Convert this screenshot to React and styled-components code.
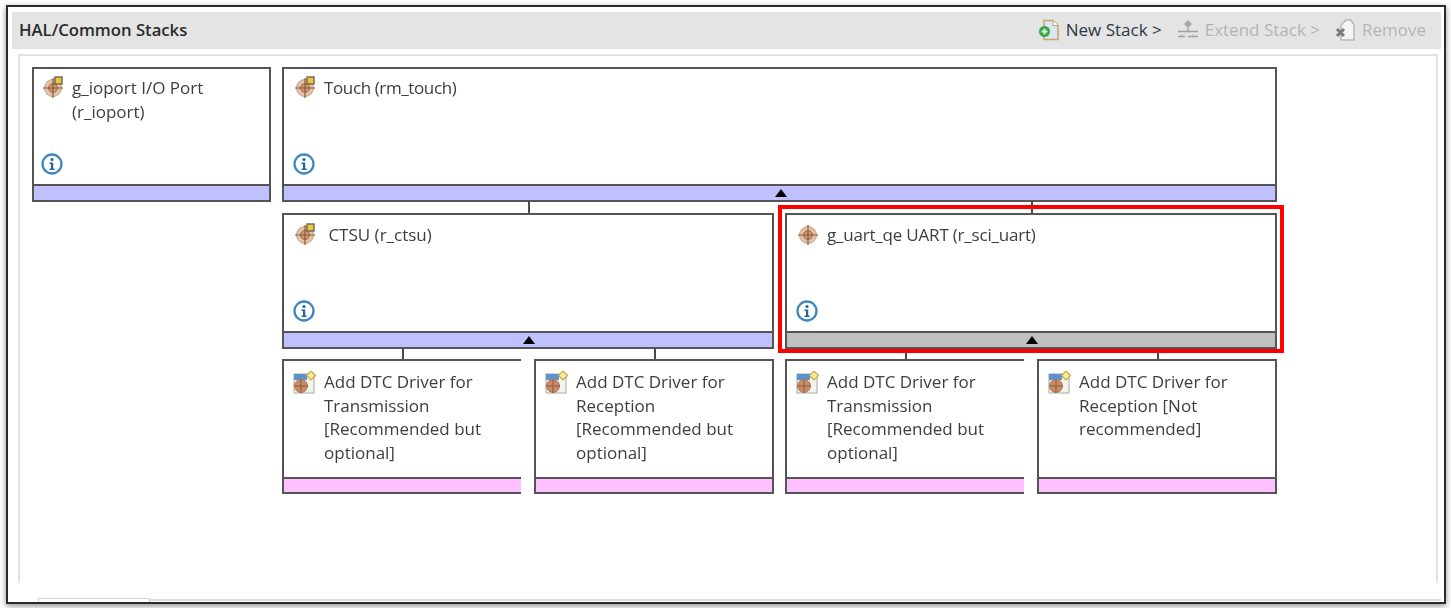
import React from "react";
import styled, { createGlobalStyle } from "styled-components";

const Global = createGlobalStyle`
  html, body { margin: 0; padding: 0; background: #fff; overflow: hidden; }
  body { width: 1451px; height: 608px; font-family: "Open Sans", "Noto Sans", sans-serif; }
`;
const Frame = styled.div`
  box-sizing: border-box; width: 1440px; height: 599px; margin: 5px 0 0 6px;
  border: 2px solid #2a2a2a; background: #fff;
  box-shadow: 0 2px 6px rgba(0,0,0,.45);
  padding: 5px 3px 0 4px; display: flex; flex-direction: column;
  filter: blur(0.55px);
`;
const Header = styled.header`
  height: 37px; box-sizing: border-box; flex: none; background: #e4e4e4; display: flex; align-items: center;
  padding: 0 15px 2px 7px; justify-content: space-between;
`;
const Title = styled.h1`
  margin: 0; font-size: 16.7px; font-weight: 600; color: #2b2b2b;
`;
const Toolbar = styled.nav`display: flex; gap: 15px;`;
const ToolButton = styled.span`
  display: flex; align-items: center; gap: ${p => (p.$disabled ? 6 : 7)}px; font-size: 17px;
  color: ${p => (p.$disabled ? "#b4b4b4" : "#2f3640")};
`;
const Panel = styled.main`
  flex: none; height: 529px; width: 1420px; box-sizing: border-box; margin: 5px 0 0 6px;
  border: solid #e2e2e2; border-width: 2px 2px 0 2px; padding: 11px 0 0 12px;
  display: flex; gap: 11px; align-items: flex-start;
`;
const TabStrip = styled.div`
  flex: none; margin-top: 15px; height: 3px; display: flex; margin-left: 26px;
`;
const Tab = styled.div`
  width: 110px; border: solid #d4d4d4; border-width: 1px 1px 0 1px; height: 3px; flex: none;
`;
const TabRest = styled.div`flex: 1; width: 1290px; border-top: 2px solid #dcdcdc; margin-top: 1px;`;

const Stack = styled.div`display: flex; flex-direction: column; width: ${p => p.$w}px; flex: none;`;
const Row = styled.div`display: flex; gap: ${p => p.$gap}px;`;
const Branch = styled.div`display: flex; flex-direction: column; width: ${p => p.$w}px; flex: none;`;
const Stub = styled.div`width: 2px; height: ${p => p.$h}px; background: #4a4a4a; align-self: center; margin-left: 2px;`;

const Card = styled.section`
  position: relative; box-sizing: border-box; height: ${p => p.$h}px; background: #fff;
  border: solid #555; border-width: ${p => (p.$open ? "2px 0 2px 2px" : "2px")};
  display: flex; flex-direction: column;
`;
const Body = styled.div`
  flex: 1; padding: ${p => `${p.$top}px 14px 0 ${p.$inset}px`};
  display: flex; flex-direction: column; min-height: 0;
`;
const Heading = styled.div`display: flex; gap: 7px; align-items: flex-start;`;
const Label = styled.div`
  font-size: 17px; line-height: ${p => p.$lh || 24}px; color: #3e3e3e; white-space: pre-line;
  letter-spacing: ${p => p.$track || 0}px;
`;
const InfoSlot = styled.div`margin-top: auto; margin-bottom: 9px; margin-left: -2px; height: 22px;`;
const Bar = styled.div`
  flex: none; height: 16px; box-sizing: border-box; border-top: 2px solid #555; background: ${p => p.$c};
  display: flex; align-items: center; justify-content: center;
`;
const DriverBar = styled(Bar)`height: 15px;`;
const Caret = styled.span`
  width: 0; height: 0; margin-left: 2px; border: solid transparent; border-width: 0 6px 8px 6px; border-bottom-color: #000;
`;
const Highlight = styled.div`
  position: absolute; inset: -10px -9px -6px -9px; border: 4px solid #f00; pointer-events: none;
`;

const Target = ({ badge }) => (
  <svg width="22" height="22" viewBox="0 0 22 22" style={{ flex: "none" }}>
    <circle cx="10" cy="12" r="8.500" fill="#e0c4ac" stroke="#c4a082" />
    <circle cx="10" cy="12" r="4.500" fill="#cf9672" stroke="#a5683f" />
    <path d="M10 2v20M0 12h20" stroke="#8a5a3a" strokeWidth="1.200" />
    {badge && <rect x="12" y="1" width="7" height="7" fill="#f3c33c" stroke="#6a6a50" strokeWidth="1.400" />}
  </svg>
);
const Info = () => (
  <svg width="22" height="22" viewBox="0 0 22 22" style={{ display: "block" }}>
    <circle cx="11" cy="11" r="9.500" fill="#fff" stroke="#3f87bd" strokeWidth="2.300" />
    <circle cx="11" cy="6.500" r="1.600" fill="#24669c" />
    <path d="M8.500 9.500h3.700v6h1.400v1.500H8.600v-1.500h1.400V11H8.500z" fill="#24669c" />
  </svg>
);
const DriverIcon = () => (
  <svg width="24" height="24" viewBox="0 0 24 24" style={{ flex: "none", marginTop: 1 }}>
    <rect x="1" y="3" width="20" height="19" fill="#f2f2ee" stroke="#a8aea0" />
    <rect x="1" y="3" width="13" height="6" fill="#5d93cc" />
    <circle cx="8" cy="15" r="6.500" fill="#c98a66" stroke="#b57a58" />
    <path d="M8 8v14M1 15h14" stroke="#8f5a3c" strokeWidth="1" />
    <path d="M18 0l4.500 4.500L18 9l-4.500-4.500z" fill="#fbe9a0" stroke="#c9a83e" strokeWidth="1.200" />
  </svg>
);
const NewIcon = () => (
  <svg width="21" height="22" viewBox="0 0 21 22">
    <path d="M6 1.500h9l5 5v14H6z" fill="#dbe6f2" stroke="#c3a86a" strokeWidth="1.500" />
    <path d="M15 1.500v5h5" fill="#fff" stroke="#c3a86a" />
    <circle cx="6.500" cy="12.500" r="5.500" fill="#3aa34a" />
    <path d="M6.500 9.500v6M3.500 12.500h6" stroke="#d8f5d8" strokeWidth="2" />
  </svg>
);
const ExtendIcon = () => (
  <svg width="22" height="22" viewBox="0 0 22 22">
    <path d="M11 1l4 4-4 4-4-4z" fill="#a8a8a8" />
    <path d="M11 9v4" stroke="#b0b0b0" strokeWidth="2" />
    <path d="M1 12.500h20" stroke="#a0a0a0" strokeWidth="1.500" />
    <path d="M1 17.500h7M11 17.500h10" stroke="#a0a0a0" strokeWidth="1.500" />
    <path d="M5 15v2M16 15v2" stroke="#b8b8b8" />
  </svg>
);
const RemoveIcon = () => (
  <svg width="21" height="22" viewBox="0 0 21 22">
    <path d="M6 6l5-5h5l3 5v15H6z" fill="#f4f4f4" stroke="#b8b8b8" strokeWidth="1.500" />
    <path d="M2 10l7 7M9 10l-7 7" stroke="#7c7c7c" strokeWidth="3" />
  </svg>
);

const Module = ({ label, h = 135, top = 7, track, badge = true, inset = 11, color = "#c0c0ff", caret, highlight }) => (
  <Card $h={h}>
    <Body $top={top} $inset={inset}>
      <Heading>
        <Target badge={badge} />
        <Label $track={track}>{label}</Label>
      </Heading>
      <InfoSlot><Info /></InfoSlot>
    </Body>
    <Bar $c={color}>{caret && <Caret />}</Bar>
    {highlight && <Highlight />}
  </Card>
);
const Driver = ({ label, open }) => (
  <Branch $w={open ? 239 : 240}>
    <Stub $h={10} />
    <Card $h={135} $open={open}>
      <Body $top={9} $inset={9}>
        <Heading>
          <DriverIcon />
          <Label $lh={23.7}>{label}</Label>
        </Heading>
      </Body>
      <DriverBar $c="#ffc0ff" />
    </Card>
  </Branch>
);

export default function App() {
  return (
    <>
      <Global />
      <Frame>
        <Header>
          <Title>HAL/Common Stacks</Title>
          <Toolbar>
            <ToolButton><NewIcon />New Stack &gt;</ToolButton>
            <ToolButton $disabled><ExtendIcon />Extend Stack &gt;</ToolButton>
            <ToolButton $disabled><RemoveIcon />Remove</ToolButton>
          </Toolbar>
        </Header>
        <Panel>
          <Stack $w={239}>
            <Module inset={9} label={"g_ioport I/O Port\n(r_ioport)"} />
          </Stack>
          <Stack $w={995}>
            <Module label="Touch (rm_touch)" track={-0.38} caret />
            <Row $gap={11}>
              <Branch $w={492}>
                <Stub $h={11} />
                <Module h={136} top={8} label={"\u00a0CTSU (r_ctsu)"} caret />
                <Row $gap={13}>
                  <Driver open label={"Add DTC Driver for\nTransmission\n[Recommended but\noptional]"} />
                  <Driver label={"Add DTC Driver for\nReception\n[Recommended but\noptional]"} />
                </Row>
              </Branch>
              <Branch $w={492}>
                <Stub $h={11} />
                <Module h={136} top={8} track={-0.2} label="g_uart_qe UART (r_sci_uart)" badge={false} color="#c0c0c0" caret highlight />
                <Row $gap={13}>
                  <Driver open label={"Add DTC Driver for\nTransmission\n[Recommended but\noptional]"} />
                  <Driver label={"Add DTC Driver for\nReception [Not\nrecommended]"} />
                </Row>
              </Branch>
            </Row>
          </Stack>
        </Panel>
        <TabStrip>
          <Tab />
          <TabRest />
        </TabStrip>
      </Frame>
    </>
  );
}
